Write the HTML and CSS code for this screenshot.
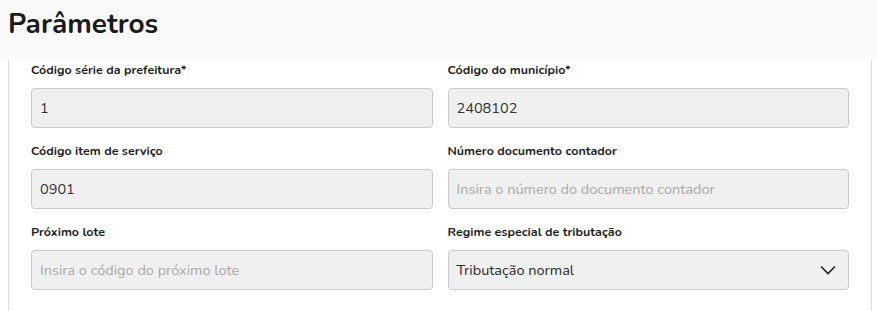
FILE: index.html
```html
<!DOCTYPE html>
<html lang="pt">
<head>
<meta charset="utf-8">
<link rel="stylesheet" href="styles.css">
</head>
<body>
<header class="page-header">
  <h1 class="title">Parâmetros</h1>
</header>
<section class="card">
  <div class="form-grid">
    <div class="field">
      <label class="label">Código série da prefeitura*</label>
      <div class="input">1</div>
    </div>
    <div class="field">
      <label class="label">Código do município*</label>
      <div class="input">2408102</div>
    </div>
    <div class="field">
      <label class="label">Código item de serviço</label>
      <div class="input">0901</div>
    </div>
    <div class="field">
      <label class="label">Número documento contador</label>
      <div class="input placeholder">Insira o número do documento contador</div>
    </div>
    <div class="field">
      <label class="label">Próximo lote</label>
      <div class="input placeholder">Insira o código do próximo lote</div>
    </div>
    <div class="field">
      <label class="label">Regime especial de tributação</label>
      <div class="input select">
        <span>Tributação normal</span>
        <svg class="chevron" width="16" height="10" viewBox="0 0 16 10"><path d="M1 1.5 L8 8.5 L15 1.5" fill="none" stroke="#222" stroke-width="1.6"/></svg>
      </div>
    </div>
  </div>
</section>
</body>
</html>
```
FILE: styles.css
```css
html, body {
  margin: 0;
  padding: 0;
  background: #ffffff;
  font-family: "Nunito", "Open Sans", "Noto Sans", sans-serif;
  color: #222;
}
.page-header {
  background: #fafafa;
  height: 60px;
  box-sizing: border-box;
  padding: 6px 8px 0 8px;
}
.title {
  margin: 0;
  font-size: 28px;
  font-weight: 700;
  line-height: 36px;
  color: #1a1a1a;
}
.card {
  margin: 0 5px 0 8px;
  border-left: 1px solid #dcdcdc;
  border-right: 1px solid #dcdcdc;
  padding: 0 22px 20px 22px;
  height: 251px;
  box-sizing: border-box;
  background: #fff;
}
.form-grid {
  display: grid;
  grid-template-columns: 1fr 1fr;
  column-gap: 15px;
  row-gap: 13px;
}
.field {
  display: flex;
  flex-direction: column;
}
.label {
  font-size: 12.5px;
  font-weight: 700;
  line-height: 20px;
  margin-bottom: 8px;
  color: #1f1f1f;
}
.input {
  height: 40px;
  box-sizing: border-box;
  border: 1px solid #cacaca;
  border-radius: 4px;
  background: #f0f0f0;
  padding: 0 8px;
  display: flex;
  align-items: center;
  font-size: 14.5px;
  color: #333;
}
.placeholder {
  color: #a9a9a9;
}
.select {
  justify-content: space-between;
  padding-right: 12px;
  color: #2a2a2a;
}
.chevron {
  display: block;
}
```
